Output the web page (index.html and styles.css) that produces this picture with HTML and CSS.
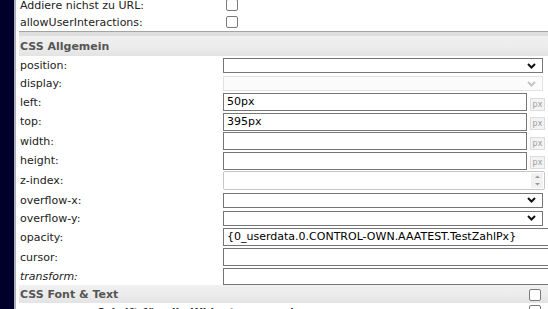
FILE: index.html
```html
<!DOCTYPE html>
<html lang="de">
<head>
<meta charset="utf-8">
<title>Widget Eigenschaften</title>
<link rel="stylesheet" href="styles.css">
</head>
<body>
<div class="layout">
  <div class="nav"></div>
  <div class="panel">
    <div class="props">
      <div class="row r1"><span class="label">Addiere nichst zu URL:</span><span class="val"><span class="check"></span></span></div>
      <div class="row r2"><span class="label">allowUserInteractions:</span><span class="val"><span class="check"></span></span></div>
      <div class="sep"></div>
      <div class="group g1"><span class="gtitle">CSS Allgemein</span></div>
      <div class="row h19"><span class="label">position:</span><span class="val"><span class="select"><svg width="9" height="6" viewBox="0 0 9 6"><path d="M1 1 L4.5 4.5 L8 1" fill="none" stroke="#111" stroke-width="2"/></svg></span></span></div>
      <div class="row h17"><span class="label">display:</span><span class="val"><span class="select disabled"><svg width="9" height="6" viewBox="0 0 9 6"><path d="M1 1 L4.5 4.5 L8 1" fill="none" stroke="#c4c4c4" stroke-width="2"/></svg></span></span></div>
      <div class="row h20"><span class="label">left:</span><span class="val"><span class="input short">50px</span><span class="px">px</span></span></div>
      <div class="row h19"><span class="label">top:</span><span class="val"><span class="input short">395px</span><span class="px">px</span></span></div>
      <div class="row h20"><span class="label">width:</span><span class="val"><span class="input short"></span><span class="px">px</span></span></div>
      <div class="row h19"><span class="label">height:</span><span class="val"><span class="input short"></span><span class="px">px</span></span></div>
      <div class="row h21"><span class="label">z-index:</span><span class="val"><span class="number"><span class="spin"><svg width="7" height="13" viewBox="0 0 7 13"><path d="M1 4 L3.5 1.5 L6 4 Z" fill="#9a9a9a"/><path d="M1 9 L3.5 11.5 L6 9 Z" fill="#9a9a9a"/></svg></span></span></span></div>
      <div class="row h18"><span class="label">overflow-x:</span><span class="val"><span class="select"><svg width="9" height="6" viewBox="0 0 9 6"><path d="M1 1 L4.5 4.5 L8 1" fill="none" stroke="#111" stroke-width="2"/></svg></span></span></div>
      <div class="row h18"><span class="label">overflow-y:</span><span class="val"><span class="select"><svg width="9" height="6" viewBox="0 0 9 6"><path d="M1 1 L4.5 4.5 L8 1" fill="none" stroke="#111" stroke-width="2"/></svg></span></span></div>
      <div class="row h20"><span class="label">opacity:</span><span class="val"><span class="input wide">{0_userdata.0.CONTROL-OWN.AAATEST.TestZahlPx}</span></span></div>
      <div class="row h20"><span class="label">cursor:</span><span class="val"><span class="input wide"></span></span></div>
      <div class="row h18"><span class="label italic">transform:</span><span class="val"><span class="input wide tall17"></span></span></div>
      <div class="group g2"><span class="gtitle">CSS Font &amp; Text</span><span class="check"></span></div>
      <div class="row last"><span class="label sub">Schrift für alle Widgets anwenden</span><span class="val end"><span class="check"></span></span></div>
    </div>
  </div>
</div>
</body>
</html>
```
FILE: styles.css
```css
html, body {
  margin: 0;
  padding: 0;
  background: #ffffff;
  overflow: hidden;
}

body {
  width: 548px;
  height: 309px;
  font-family: "DejaVu Sans", Verdana, sans-serif;
  font-size: 11px;
  color: #222222;
}

.layout {
  display: flex;
  height: 309px;
}

.nav {
  width: 14px;
  flex: none;
  background: #00002a;
  border-right: 2px solid #b0b0b8;
}

.panel {
  flex: 1;
  padding-left: 3px;
  overflow: hidden;
}

.props {
  margin-top: -4px;
  display: flex;
  flex-direction: column;
}

.row {
  display: grid;
  grid-template-columns: 204px 1fr;
  align-items: center;
}

.r1 { height: 18px; }
.r2 { height: 16px; }
.h17 { height: 17px; }
.h18 { height: 18px; }
.h19 { height: 19px; }
.h20 { height: 20px; }
.h21 { height: 21px; }

.label {
  padding-left: 1px;
  white-space: nowrap;
  line-height: 13px;
}

.italic { font-style: italic; }

.val {
  display: flex;
  align-items: center;
  min-width: 0;
}

.val.end {
  justify-content: flex-end;
  padding-right: 7px;
}

.check {
  width: 10px;
  height: 10px;
  border: 1px solid #7a7a7a;
  border-radius: 2px;
  background: #ffffff;
  margin-left: 3px;
  flex: none;
}

.sep {
  margin-top: 1px;
  height: 4px;
  border-top: 1px solid #a4a4a4;
  background: #dedede;
}

.group {
  display: flex;
  align-items: center;
  justify-content: space-between;
  background: linear-gradient(#f0f0f0, #ececec 55%, #e3e3e3);
  padding-left: 1px;
}

.g1 { height: 20px; }
.g2 { height: 18px; padding-right: 7px; padding-top: 1px; box-sizing: border-box; }
.g2 .check { margin-left: 0; }

.gtitle {
  font-weight: bold;
  color: #555555;
  line-height: 13px;
}

.select {
  box-sizing: border-box;
  width: 320px;
  height: 15px;
  border: 1px solid #767676;
  background: #ffffff;
  display: flex;
  align-items: center;
  justify-content: flex-end;
  padding-right: 6px;
}

.select.disabled {
  border-color: #e2e2e2;
  background: #fbfbfb;
}

.input {
  box-sizing: border-box;
  height: 18px;
  border: 1px solid #767676;
  background: #ffffff;
  padding: 0 2px 0 3px;
  line-height: 16px;
  color: #000000;
  white-space: nowrap;
  overflow: hidden;
  flex: none;
}

.input.short { width: 304px; }
.input.wide { width: 340px; }
.input.tall17 { height: 17px; }

.px {
  box-sizing: border-box;
  width: 15px;
  height: 13px;
  margin-left: 3px;
  margin-top: 4px;
  border: 1px solid #dcdcdc;
  background: #f3f3f3;
  color: #9c9c9c;
  font-size: 8px;
  line-height: 11px;
  text-align: center;
  flex: none;
}

.number {
  box-sizing: border-box;
  width: 322px;
  height: 19px;
  border: 1px solid #c6c6c6;
  border-radius: 2px;
  background: #ffffff;
  display: flex;
  justify-content: flex-end;
  align-items: center;
  padding-right: 1px;
}

.spin {
  width: 12px;
  height: 15px;
  background: #f1f1f1;
  display: flex;
  align-items: center;
  justify-content: center;
}

.last {
  height: 19px;
  align-items: start;
}

.last .label {
  padding-left: 78px;
  padding-top: 3px;
  font-weight: bold;
  color: #333333;
}

.last .val.end .check {
  margin-top: 2px;
}
```
